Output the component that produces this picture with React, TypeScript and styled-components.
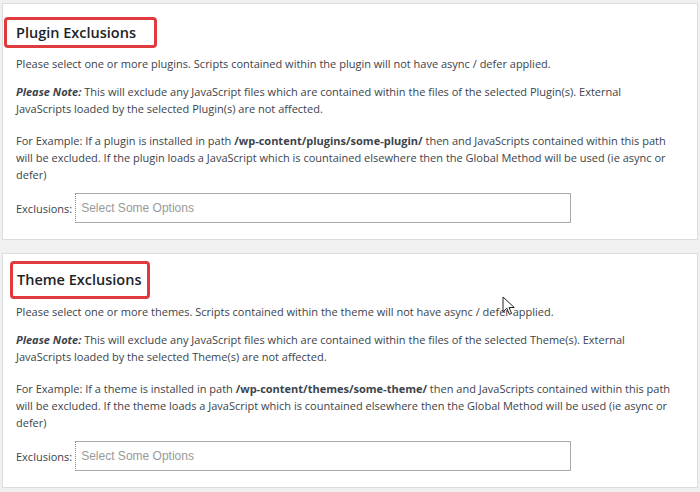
import React from 'react';
import styled, { createGlobalStyle } from 'styled-components';

const GlobalStyle = createGlobalStyle`
  html, body {
    margin: 0;
    padding: 0;
    background: #f0f0f1;
  }
`;

const Page = styled.div`
  display: flex;
  flex-direction: column;
  gap: 13px;
  padding: 3px 2px 3px 2px;
  width: 696px;
  font-family: 'Open Sans', 'Noto Sans', sans-serif;
  color: #3c434a;
  position: relative;
`;

const Card = styled.section`
  background: #fff;
  border: 1px solid #dcdcde;
  padding: 13px 14px 16px 13px;
`;

const Heading = styled.h2<{ $pad: string; $offset: number; $top: number; $bottom: number }>`
  display: block;
  width: fit-content;
  margin: ${(p) => `${p.$top}px 0 ${p.$bottom}px ${p.$offset}px`};
  padding: ${(p) => p.$pad};
  border: 3px solid #e0393e;
  border-radius: 4px;
  font-size: 14.5px;
  font-weight: 600;
  line-height: 25px;
  color: #1d2327;
`;

const Text = styled.p<{ $space?: number }>`
  margin: ${(p) => p.$space ?? 0}px 0 0;
  font-size: 11px;
  line-height: 17px;
`;

const FieldRow = styled.div`
  display: flex;
  align-items: center;
  gap: 3px;
  margin-top: 10px;
`;

const Label = styled.span`
  font-size: 11px;
`;

const Choices = styled.div`
  box-sizing: border-box;
  width: 496px;
  height: 30px;
  display: flex;
  align-items: center;
  padding-left: 5px;
  border: 1px solid #aaa;
  border-left: 1px dotted #888;
  background: #fff;
  font-family: 'Liberation Sans', Arial, sans-serif;
  font-size: 12px;
  color: #999;
`;

const Cursor = styled.svg`
  position: absolute;
  left: 502px;
  top: 296px;
`;

type SectionProps = {
  title: string;
  kind: string;
  plural: string;
  pad: string;
  offset: number;
  top: number;
  bottom: number;
};

function ExclusionSection({ title, kind, plural, pad, offset, top, bottom }: SectionProps) {
  const Kind = kind.charAt(0).toUpperCase() + kind.slice(1);
  return (
    <Card>
      <Heading $pad={pad} $offset={offset} $top={top} $bottom={bottom}>{title}</Heading>
      <Text>
        Please select one or more {plural}. Scripts contained within the {kind} will not have async / defer applied.
      </Text>
      <Text $space={11}>
        <b><i>Please Note:</i></b> This will exclude any JavaScript files which are contained within the files of the selected {Kind}(s). External
        <br />
        JavaScripts loaded by the selected {Kind}(s) are not affected.
      </Text>
      <Text $space={15}>
        For Example: If a {kind} is installed in path <b>/wp-content/{plural}/some-{kind}/</b> then and JavaScripts contained within this path
        <br />
        will be excluded. If the {kind} loads a JavaScript which is countained elsewhere then the Global Method will be used (ie async or
        <br />
        defer)
      </Text>
      <FieldRow>
        <Label>Exclusions:</Label>
        <Choices>Select Some Options</Choices>
      </FieldRow>
    </Card>
  );
}

export default function App() {
  return (
    <>
      <GlobalStyle />
      <Page>
        <ExclusionSection
          title="Plugin Exclusions"
          kind="plugin"
          plural="plugins"
          pad="0 18px 0 9px"
          offset={-12}
          top={0}
          bottom={7}
        />
        <ExclusionSection
          title="Theme Exclusions"
          kind="theme"
          plural="themes"
          pad="3px 6px 4px 4px"
          offset={-6}
          top={-6}
          bottom={4}
        />
        <Cursor width="14" height="21" viewBox="0 0 14 21">
          <path d="M1 1 L1 16 L4.8 12.2 L7.4 18.4 L9.6 17.5 L7.1 11.5 L12.3 11.5 Z" fill="#fff" stroke="#222" strokeWidth="1" strokeLinejoin="round" />
        </Cursor>
      </Page>
    </>
  );
}
